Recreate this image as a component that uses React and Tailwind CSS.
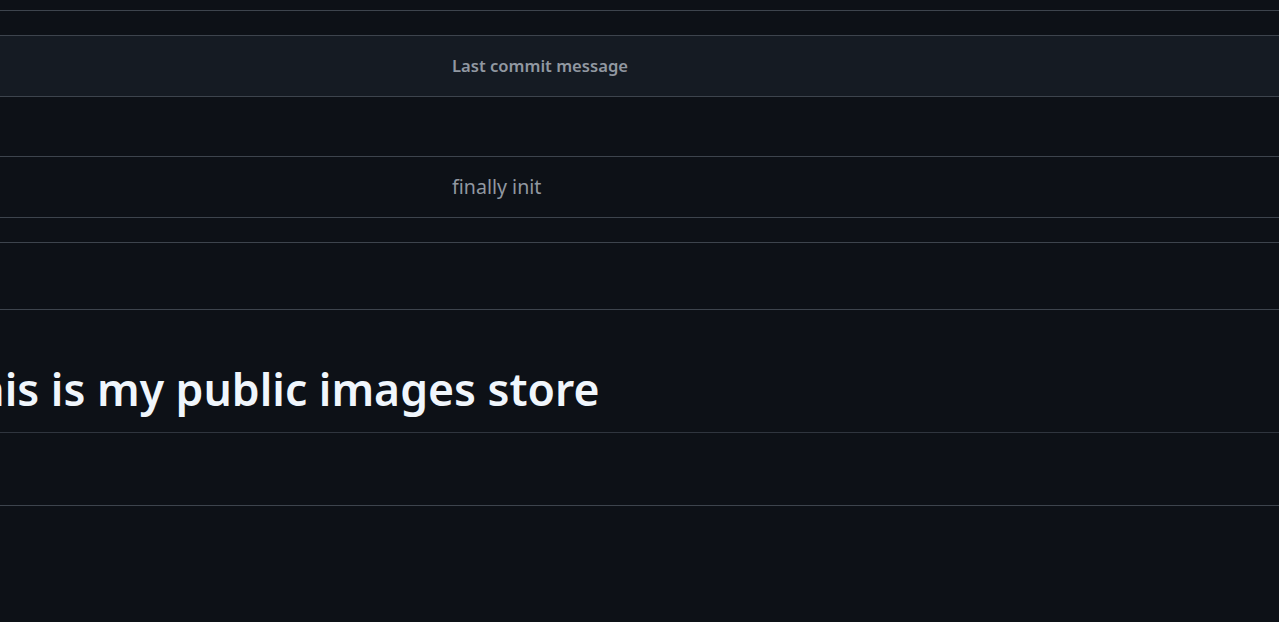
export default function App() {
  const font = { fontFamily: '"Noto Sans", "Open Sans", sans-serif' };
  return (
    <div className="w-[1279px] h-[622px] overflow-hidden bg-[#0d1117]" style={font}>
      <div className="h-[10px]" />
      <div className="border-t border-[#3d444d] h-[25px]" />
      <div className="border-t border-[#3d444d] h-[61px] bg-[#151b23] flex items-center pl-[452px]">
        <span className="text-[16.6px] font-semibold text-[#9198a1]">Last commit message</span>
      </div>
      <div className="border-t border-[#3d444d] h-[60px]" />
      <div className="border-t border-[#3d444d] h-[61px] flex items-center pl-[452px]">
        <span className="text-[19.6px] text-[#9198a1]">finally init</span>
      </div>
      <div className="border-t border-[#3d444d] h-[25px]" />
      <div className="border-t border-[#3d444d] h-[67px]" />
      <div className="border-t border-[#3d444d] pt-[50px] -ml-[49px]">
        <h1 className="text-[44.5px] font-semibold leading-[58px] text-[#f0f6fc] pb-[14px] border-b border-[#2f353e] w-[1400px]">
          This is my public images store
        </h1>
      </div>
      <div className="h-[72px]" />
      <div className="border-t border-[#3d444d]" />
    </div>
  );
}
